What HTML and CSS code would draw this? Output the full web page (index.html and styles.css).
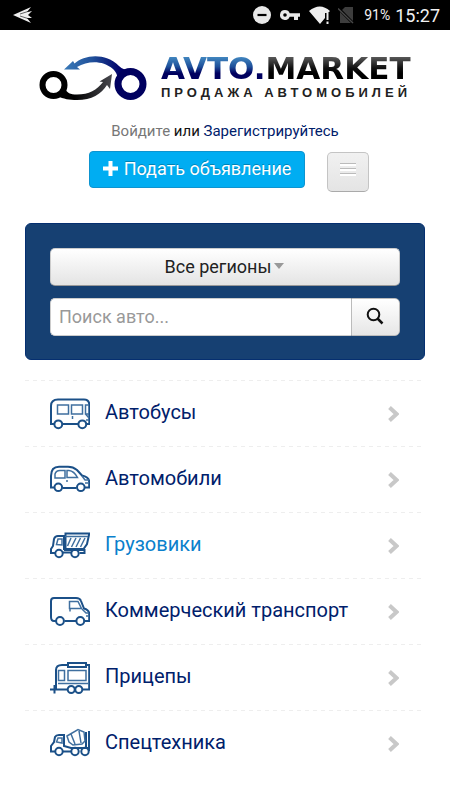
FILE: index.html
```html
<!DOCTYPE html>
<html lang="ru">
<head>
<meta charset="utf-8">
<meta name="viewport" content="width=device-width, initial-scale=1">
<title>AVTO.MARKET</title>
<link rel="stylesheet" href="styles.css">
</head>
<body>
<div class="status">
  <svg class="status-app" width="20" height="18" viewBox="0 0 20 18" aria-hidden="true"><path d="M0 9 18 1 14 6 19 5 15 9 19 12 14 12 18 17Z" fill="#eee"/><path d="M7 8 18 4.500M7 10 18 13.500" stroke="#000" stroke-width=".6"/></svg>
  <div class="status-right">
    <svg width="18" height="18" viewBox="0 0 18 18" aria-hidden="true"><circle cx="9" cy="9" r="9" fill="#e8e8e8"/><path d="M4.500 9H13.500" stroke="#000" stroke-width="2.200"/></svg>
    <svg class="status-key" width="20" height="10" viewBox="0 0 20 10" aria-hidden="true"><path fill="#e8e8e8" fill-rule="evenodd" d="M5 0a5 5 0 0 1 4.700 3.300H20V6.700H18V10H14V6.700H9.700A5 5 0 1 1 5 0ZM5 3.200a1.800 1.800 0 1 0 0 3.600a1.800 1.800 0 0 0 0-3.600Z"/></svg>
    <svg class="status-wifi" width="22" height="19" viewBox="0 0 22 19" aria-hidden="true"><path d="M0 5Q11-4 21 5L19 7H16V12L11 18Z" fill="#eee"/><path d="M18.500 7V14M18.500 15.500V18" stroke="#eee" stroke-width="2"/></svg>
    <svg class="status-sim" width="16" height="18" viewBox="0 0 16 18" aria-hidden="true"><path d="M7 1H15V17H2V6Z" fill="#3d3d3d"/><path d="M0 2 15 17" stroke="#000" stroke-width="3"/><path d="M0 2.500 15 17" stroke="#484848" stroke-width="1.500"/></svg>
    <span class="battery">91%</span>
    <span class="clock">15:27</span>
  </div>
</div>

<header class="header">
  <a class="logo" href="#">
    <svg width="109" height="47" viewBox="0 0 109 47" aria-hidden="true">
      <defs>
        <linearGradient id="blue" x1="25" y1="0" x2="82" y2="0" gradientUnits="userSpaceOnUse"><stop offset="0" stop-color="#3a7ab8"/><stop offset=".5" stop-color="#20509a"/><stop offset="1" stop-color="#000068"/></linearGradient>
        <linearGradient id="dark" x1="35" y1="0" x2="74" y2="0" gradientUnits="userSpaceOnUse"><stop offset="0" stop-color="#000"/><stop offset="1" stop-color="#4a4a50"/></linearGradient>
      </defs>
      <circle cx="14.500" cy="30" r="11" fill="none" stroke="#000" stroke-width="6"/>
      <path d="M26 33C28 38 31 39.500 38 39.500C50 39.500 58 35 64 27L60.500 26.500 73 19 71 34 68 30C62 39 53 45 38 45C30 45 25 44 18 41Z" fill="url(#dark)"/>
      <path d="M25 14.500 34 6 35.500 8.500C45 0 66-3 80 11C83 14 87 15 91 15L79 28C79 22 78 18 74 14C63 5 49 6 38 12L41 14.500Z" fill="url(#blue)"/>
      <circle cx="91.500" cy="29" r="12.500" fill="none" stroke="#00005f" stroke-width="7"/>
    </svg>
    <span class="logo-words">
      <span class="logo-name"><span class="name-blue">AVTO.</span><span class="name-dark">MARKET</span></span>
      <span class="logo-tagline">ПРОДАЖА АВТОМОБИЛЕЙ</span>
    </span>
  </a>
  <p class="account"><a class="login" href="#">Войдите</a> или <a href="#">Зарегистрируйтесь</a></p>
  <div class="actions">
    <button class="post" type="button"><svg width="15" height="15" viewBox="0 0 15 15" aria-hidden="true"><path d="M7.500 0V15M0 7.500H15" stroke="#fff" stroke-width="4"/></svg>Подать объявление</button>
    <button class="menu" type="button" aria-label="Меню"><svg width="16" height="16" viewBox="0 0 16 16" aria-hidden="true"><path d="M0 2.500H16M0 7.500H16M0 12.500H16" stroke="#fff" stroke-width="3"/><path d="M0 1.500H16M0 6.500H16M0 11.500H16" stroke="#bbb"/></svg></button>
  </div>
</header>

<main>
  <form class="search">
    <div class="region">
      <select aria-label="Регион"><option>Все регионы</option></select>
    </div>
    <div class="query">
      <input type="text" placeholder="Поиск авто..." aria-label="Поиск авто">
      <button type="submit" aria-label="Найти"><svg width="18" height="18" viewBox="0 0 18 18" fill="none" stroke="#111" aria-hidden="true"><circle cx="7.500" cy="7.500" r="5.800" stroke-width="2"/><path d="M11.500 11.500 16.500 16.500" stroke-width="2.500"/></svg></button>
    </div>
  </form>

  <nav class="categories" aria-label="Категории">
    <a href="#">
      <svg class="pic" viewBox="0 0 40 32" aria-hidden="true"><path d="M4 26H1V8Q1 1.500 8 1.500H34Q39.300 1.500 39.300 7V26H36.500M12.500 26H28"/><circle cx="8.300" cy="26.300" r="3.900"/><circle cx="32.300" cy="26.300" r="3.900"/><path class="thin" d="M7.500 7H18.500V16H7.500ZM21.500 7H32.500V16H21.500ZM39 7H35.500V16H39M22.500 18V21M35.500 16 39 20M36 22H39"/></svg>
      <span>Автобусы</span><svg class="chev" viewBox="0 0 11 16" aria-hidden="true"><path d="M1.500 1.500 8.500 8 1.500 14.500"/></svg>
    </a>
    <a href="#">
      <svg class="pic" viewBox="0 0 40 32" aria-hidden="true"><path d="M4 23.500H1V12Q1 2.800 9 2.800H18Q23 2.800 27 6L32 11.500Q39.200 13 39.200 18V23.500H35M12.500 24H26.500"/><circle cx="8.300" cy="23.300" r="3.800"/><circle cx="30.800" cy="23.300" r="3.800"/><path class="thin" d="M5 14V10Q6 6.500 10 6.500H15V14ZM17 6.500H19Q24 7 27.500 13.500H17ZM17 16V18M32 12 35 16 39 16M35 19H39"/></svg>
      <span>Автомобили</span><svg class="chev" viewBox="0 0 11 16" aria-hidden="true"><path d="M1.500 1.500 8.500 8 1.500 14.500"/></svg>
    </a>
    <a class="active" href="#">
      <svg class="pic" viewBox="0 0 40 32" aria-hidden="true"><path d="M5 23H1V19L3 16 4 9Q5 6 8 6H14V20M13 22.500H21M29.500 23H34.500V20H14M15.500 3.500H39.300L37 14 33.500 19H15.500Z"/><circle cx="9" cy="23.500" r="3.700"/><circle cx="25" cy="23.500" r="3.700"/><path class="thin" d="M6.500 14.500 8 9H12V15ZM15 6.500H38M21 8 17.500 16M26 8 21.500 17M30.500 8 26 17M35 8 30.500 17"/></svg>
      <span>Грузовики</span><svg class="chev" viewBox="0 0 11 16" aria-hidden="true"><path d="M1.500 1.500 8.500 8 1.500 14.500"/></svg>
    </a>
    <a href="#">
      <svg class="pic" viewBox="0 0 40 32" aria-hidden="true"><path d="M6 25H4Q1 25 1 21V5Q1 2 4 2H26Q30 2 31 5L34 12.500Q39.200 14 39.200 18V25H34.500M14.500 25H26"/><circle cx="10" cy="25" r="3.900"/><circle cx="30.300" cy="25" r="3.900"/><path class="thin" d="M19.500 5.500H28L31.500 12.500H19.500ZM20 12V15.500M32 13 36 17H39M36 20H39"/></svg>
      <span>Коммерческий транспорт</span><svg class="chev" viewBox="0 0 11 16" aria-hidden="true"><path d="M1.500 1.500 8.500 8 1.500 14.500"/></svg>
    </a>
    <a href="#">
      <svg class="pic" viewBox="0 0 40 32" aria-hidden="true"><path d="M17 27.500H6V8Q6 3 12 3H18M36 3H39.200V27.500H32.500M18 1H36V5H18ZM0 27.500H7M4.500 23V31.500"/><circle cx="21.200" cy="27.500" r="3.500"/><circle cx="28.800" cy="27.500" r="3.500"/><path class="thin" d="M8.500 8.500H14.500V18.500H8.500ZM18 8.500H36V18.500H18ZM8 21.500H38"/></svg>
      <span>Прицепы</span><svg class="chev" viewBox="0 0 11 16" aria-hidden="true"><path d="M1.500 1.500 8.500 8 1.500 14.500"/></svg>
    </a>
    <a href="#">
      <svg class="pic" viewBox="0 0 40 32" aria-hidden="true"><path d="M5 23.500H1V18L4 14 5 9Q6 7 9 7H14V18L21 20H39M13 23.500H21M39 3V23M36 4V19"/><circle cx="9" cy="23.500" r="3.700"/><circle cx="25" cy="23.500" r="3.700"/><circle cx="35" cy="23.500" r="3.700"/><path class="thin" d="M6.500 14 8 10H12V15ZM17 8 28 1.500 34 4 35 13 32 16 23 17 19 14ZM21 6 25 16M29 3 31 15"/></svg>
      <span>Спецтехника</span><svg class="chev" viewBox="0 0 11 16" aria-hidden="true"><path d="M1.500 1.500 8.500 8 1.500 14.500"/></svg>
    </a>
  </nav>
</main>
</body>
</html>
```

FILE: styles.css
```css
* { box-sizing: border-box; }

body {
  margin: 0;
  background: #fff;
  color: #111;
  font-family: Roboto, "Liberation Sans", sans-serif;
}

a { color: #00206b; text-decoration: none; }
button, input, select { font: inherit; }
svg { flex: none; }

.status {
  display: flex;
  align-items: center;
  justify-content: space-between;
  height: 30px;
  padding: 0 10px 0 13px;
  background: #000;
  color: #f2f2f2;
}
.status-right { display: flex; align-items: center; }
.status-key { margin-left: 9px; }
.status-wifi { margin-left: 9px; }
.status-sim { margin-left: 7px; }
.battery { margin-left: 10px; font-size: 14px; }
.clock { margin-left: 5px; font-size: 18px; }

.header {
  display: flex;
  flex-direction: column;
  align-items: center;
  padding-top: 25px;
}
.logo { display: flex; gap: 13px; }
.logo-words { display: flex; flex-direction: column; }
.logo-name {
  display: flex;
  font: bold 31px/26px "DejaVu Sans", sans-serif;
}
.name-blue, .name-dark {
  background: linear-gradient(#3f83bd 10%, #1d4f9a 45%, #00005f 70%);
  background-clip: text;
  color: transparent;
}
.name-dark { background-image: linear-gradient(#555 10%, #111 50%, #000 70%); }
.logo-tagline {
  color: #222;
  font: bold 13px/24px "Liberation Sans", sans-serif;
  letter-spacing: 4px;
}

.account { margin: 16px 0 0; font-size: 15px; line-height: 20px; }
.login { color: #777; }

.actions { display: flex; gap: 22px; margin-top: 10px; padding-left: 8px; }
.post {
  display: flex;
  align-items: center;
  justify-content: center;
  gap: 6px;
  height: 37px;
  padding: 0 13px 2px;
  border: 1px solid #0d94d0;
  border-radius: 4px;
  background: #00adf2;
  color: #fff;
  font-size: 18px;
  text-shadow: 0 -1px 0 rgba(0, 0, 0, .25);
}
.menu {
  display: flex;
  align-items: center;
  justify-content: center;
  width: 42px;
  height: 40px;
  margin-top: 1px;
  padding: 0 0 4px;
  border: 1px solid #c4c4c4;
  border-bottom-color: #aaa;
  border-radius: 5px;
  background: linear-gradient(#f1f1f1, #e4e4e4);
}

.search {
  display: grid;
  gap: 12px;
  margin: 31px 25px 0;
  padding: 24px 24px 23px;
  border: 1px solid #052f70;
  border-radius: 6px;
  background: #164072;
}
.region { position: relative; }
.region select {
  display: block;
  width: 100%;
  height: 38px;
  padding: 0 14px 2px 0;
  border: 1px solid #ccc;
  border-bottom-color: #999;
  border-radius: 5px;
  background: linear-gradient(#fff, #e4e4e4);
  color: #222;
  font-size: 18px;
  text-align: center;
  text-align-last: center;
  appearance: none;
}
.region::after {
  content: "";
  position: absolute;
  top: 15px;
  left: calc(50% + 49px);
  border: 5px solid transparent;
  border-top: 6px solid #999;
  border-bottom: 0;
  pointer-events: none;
}
.query { display: flex; }
.query input {
  flex: 1;
  min-width: 0;
  height: 38px;
  padding: 0 8px 2px;
  border: 1px solid #ccc;
  border-right: 0;
  border-radius: 5px 0 0 5px;
  background: #fff;
  font-size: 18px;
}
.query input::placeholder { color: #999; }
.query button {
  display: flex;
  align-items: center;
  justify-content: center;
  width: 49px;
  padding: 0 2px 2px 0;
  border: 1px solid #bbb;
  border-radius: 0 5px 5px 0;
  background: linear-gradient(#fff, #e6e6e6);
}

.categories { margin: 20px 25px 0; }
.categories a {
  display: flex;
  align-items: center;
  gap: 15px;
  height: 66px;
  padding: 0 26px 0 25px;
  background: repeating-linear-gradient(90deg, #eee 0 4px, transparent 4px 8px) top / 100% 1px no-repeat;
  font-size: 20px;
}
.categories a.active { color: #0a80cc; }
.categories span { flex: 1; padding-bottom: 2px; }
.pic {
  width: 40px;
  height: 32px;
  margin-top: 2px;
  fill: none;
  stroke: #1b5088;
  stroke-width: 2;
}
.pic .thin { stroke: #3f6f9f; stroke-width: 1.5px; }
.chev {
  width: 11px;
  height: 16px;
  margin-top: 2px;
  fill: none;
  stroke: #c8c8c8;
  stroke-width: 4;
}
```
